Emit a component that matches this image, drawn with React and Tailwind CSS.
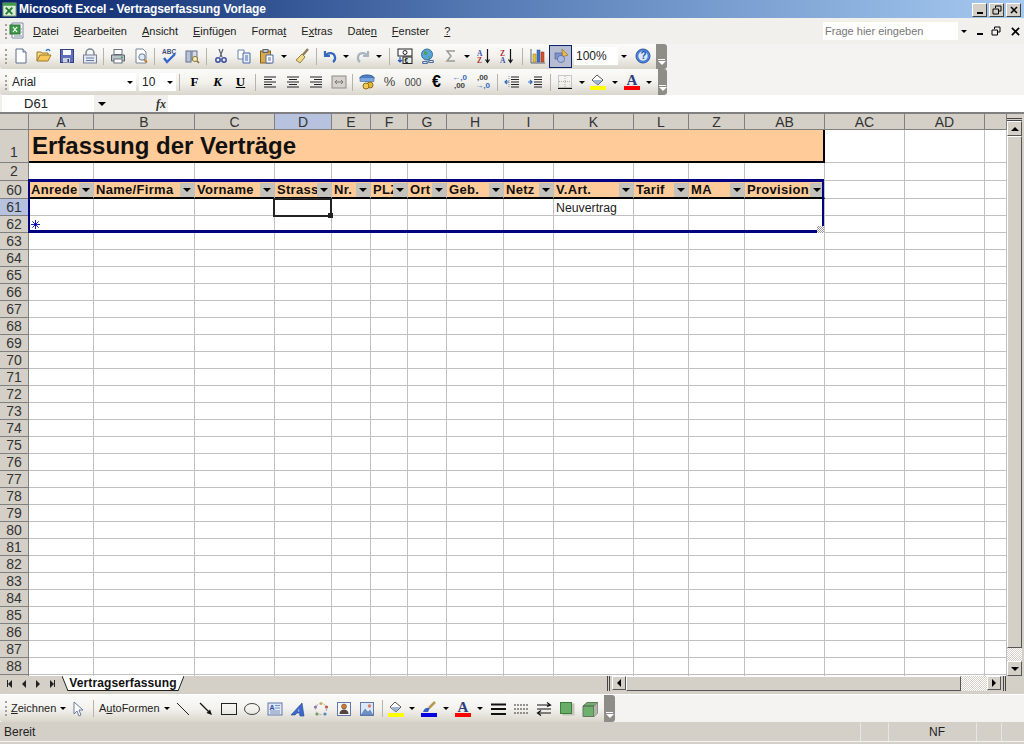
import React from 'react';

const sans = 'font-["Liberation_Sans",Arial,sans-serif]';

const columns = [
  { name: 'A', label: 'Anrede' },
  { name: 'B', label: 'Name/Firma' },
  { name: 'C', label: 'Vorname' },
  { name: 'D', label: 'Strass', active: true },
  { name: 'E', label: 'Nr.' },
  { name: 'F', label: 'PLZ' },
  { name: 'G', label: 'Ort' },
  { name: 'H', label: 'Geb.' },
  { name: 'I', label: 'Netz' },
  { name: 'K', label: 'V.Art.' },
  { name: 'L', label: 'Tarif' },
  { name: 'Z', label: 'MA' },
  { name: 'AB', label: 'Provision' },
  { name: 'AC' },
  { name: 'AD' },
  { name: '' },
];

const gridCols = 'grid-cols-[29px_65px_101px_80px_57px_39px_37px_39px_57px_50px_80px_55px_56px_80px_80px_80px_22px]';
const restRows = Array.from({ length: 26 }, (_, i) => 63 + i);

// toolbar glyphs, all on a 16x16 box
const icons = {
  doc: <><path d="M3 1h7l3 3v11H3z" fill="#fff" stroke="#5d6f8c" /><path d="M10 1v3h3" fill="#dde6f2" stroke="#5d6f8c" /></>,
  open: <><path d="M1 13V4h4l1 1h6v2" fill="#f4d98a" stroke="#9c7a26" /><path d="M1 13l3-6h11l-3 6z" fill="#f7c85a" stroke="#9c7a26" /><path d="M10 3c1-2 3-2 4 0" fill="none" stroke="#2f7ad1" strokeWidth="1.5" /></>,
  save: <><rect x="1.5" y="1.5" width="13" height="13" fill="#5f6fc0" stroke="#33407f" /><rect x="4" y="2" width="8" height="5" fill="#fff" /><rect x="4" y="10" width="7" height="4.5" fill="#cfd3dd" /><rect x="8.5" y="11" width="1.5" height="3" fill="#33407f" /></>,
  perm: <><path d="M4 7V5a4 4 0 018 0v2" fill="none" stroke="#7d8796" strokeWidth="1.5" /><rect x="1.5" y="7" width="13" height="8" fill="#e6e8ee" stroke="#76809a" /><path d="M4 10h8M4 12.5h8" stroke="#5a7db0" /></>,
  print: <><rect x="4" y="1.5" width="8" height="5" fill="#fff" stroke="#6a7280" /><path d="M1.5 7h13v6h-13z" fill="#bcc4cc" stroke="#5d6470" /><rect x="4" y="11" width="8" height="4" fill="#fff" stroke="#6a7280" /><rect x="11" y="8.5" width="2" height="1.5" fill="#49a34f" /></>,
  preview: <><path d="M3 1h7l3 3v11H3z" fill="#fff" stroke="#7a8596" /><circle cx="9" cy="9" r="3.2" fill="#dcebf8" stroke="#6e7f99" /><path d="M11 11.5l3 3" stroke="#b8873a" strokeWidth="2" /></>,
  spell: <><text x="1" y="6" fontSize="6.5" fontWeight="700" fill="#42507a" fontFamily="Liberation Sans">ABC</text><path d="M3 10l3 4 8-8" fill="none" stroke="#3667c9" strokeWidth="2.4" /></>,
  research: <><rect x="2" y="3" width="5" height="11" fill="#b6c3d8" stroke="#63718c" /><rect x="8" y="3" width="5" height="9" fill="#d6dbe4" stroke="#63718c" /><circle cx="11" cy="11" r="2.6" fill="#f6e9b8" stroke="#8b7a3e" /><path d="M13 13l2 2" stroke="#8b6a2a" strokeWidth="1.6" /></>,
  cut: <><path d="M6 1l3 8M10 1L7 9" stroke="#5c6470" strokeWidth="1.2" /><circle cx="5" cy="12" r="2.2" fill="none" stroke="#3a4fa0" strokeWidth="1.5" /><circle cx="11" cy="12" r="2.2" fill="none" stroke="#3a4fa0" strokeWidth="1.5" /></>,
  copy: <><path d="M2 2h6v9H2z" fill="#fff" stroke="#6a83ad" /><path d="M7 5h7v10H7z" fill="#e9f0fb" stroke="#4a6aa5" /><path d="M9 8h3M9 10h3M9 12h3" stroke="#4a6aa5" /></>,
  paste: <><rect x="1.5" y="3" width="10" height="12" fill="#d9a94a" stroke="#82601e" /><rect x="4" y="1.5" width="5" height="3" fill="#c3c8cf" stroke="#5b616a" /><path d="M7 7h7v8H7z" fill="#fff" stroke="#4a6aa5" /><path d="M9 10h3M9 12h3" stroke="#4a6aa5" /></>,
  brush: <><path d="M14 1L8 8" stroke="#8c7b5d" strokeWidth="2.4" /><path d="M8 6l3 3-5 6-4-3z" fill="#efd98c" stroke="#94823f" /></>,
  undo: <path d="M3 3v5h5M3.5 8C6 4 12 4 13 9c.4 2-.5 4-2 5" fill="none" stroke="#3467bd" strokeWidth="2.2" />,
  redo: <path d="M13 3v5H8M12.5 8C10 4 4 4 3 9c-.4 2 .5 4 2 5" fill="none" stroke="#a9b5bd" strokeWidth="2.2" />,
  cash: <><rect x="1" y="1" width="14" height="7" fill="#fff" stroke="#222" /><circle cx="8" cy="4.5" r="2" fill="none" stroke="#222" /><rect x="6" y="9" width="9" height="6.5" fill="#e8f0e6" stroke="#222" /><text x="7.5" y="14.5" fontSize="6.5" fontWeight="700" fill="#111" fontFamily="Liberation Sans">€</text><path d="M3 9v5m-2-2l2 2 2-2" fill="none" stroke="#1f55b8" strokeWidth="1.2" /></>,
  globe: <><circle cx="7" cy="6.5" r="5.5" fill="#5aa3d8" stroke="#3a6f99" /><path d="M4 3c2 0 4 1 3 3S4 7 4 5zM8 8c2 0 2 2 1 3" fill="#4da24d" /><path d="M3 13.5h4a2 2 0 010 2H3a2 2 0 010-2zM9 12.5h4a2 2 0 010 2H9a2 2 0 010-2z" fill="none" stroke="#4a6e9e" strokeWidth="1.2" /></>,
  sum: <path d="M12 3H4l4 5-4 5h8" fill="none" stroke="#9a9a96" strokeWidth="1.5" />,
  az: <><text x="1" y="7.5" fontSize="7.5" fontWeight="700" fill="#3a52a8" fontFamily="Liberation Serif">A</text><text x="1" y="15" fontSize="7.5" fontWeight="700" fill="#b03030" fontFamily="Liberation Serif">Z</text><path d="M11.5 1v13M9.5 11.5l2 3 2-3" fill="none" stroke="#111" strokeWidth="1.2" /></>,
  za: <><text x="1" y="7.5" fontSize="7.5" fontWeight="700" fill="#b03030" fontFamily="Liberation Serif">Z</text><text x="1" y="15" fontSize="7.5" fontWeight="700" fill="#3a52a8" fontFamily="Liberation Serif">A</text><path d="M11.5 1v13M9.5 11.5l2 3 2-3" fill="none" stroke="#111" strokeWidth="1.2" /></>,
  chart: <><path d="M1 1v14h14" fill="none" stroke="#5c6470" /><rect x="3" y="6" width="3" height="8" fill="#e8c33b" stroke="#8a7420" strokeWidth=".5" /><rect x="7" y="2" width="3" height="12" fill="#3f76c4" stroke="#274d86" strokeWidth=".5" /><rect x="11" y="4" width="3" height="10" fill="#d2502f" stroke="#8c3018" strokeWidth=".5" /></>,
  draw: <><path d="M9 1l6 6-6 2z" fill="#e6b94b" stroke="#8b6a20" strokeWidth=".6" /><rect x="2" y="5" width="7" height="6" fill="#7f95cf" stroke="#45578f" strokeWidth=".6" /><circle cx="8" cy="11" r="3.6" fill="#a9b8e0" stroke="#45578f" strokeWidth=".6" /></>,
  help: <><circle cx="8" cy="8" r="7" fill="#4d84d8" stroke="#2a57a3" /><circle cx="8" cy="8" r="4.7" fill="#dbe8fa" /><text x="5.4" y="11.4" fontSize="10" fontWeight="700" fill="#2456ad" fontFamily="Liberation Sans">?</text></>,
  left: <path d="M2 3h12M2 5.5h8M2 8h12M2 10.5h8M2 13h12" stroke="#222" />,
  center: <path d="M2 3h12M4 5.5h8M2 8h12M4 10.5h8M2 13h12" stroke="#222" />,
  right: <path d="M2 3h12M6 5.5h8M2 8h12M6 10.5h8M2 13h12" stroke="#222" />,
  merge: <><rect x="1" y="2" width="14" height="12" fill="#d4d2ca" stroke="#8d8c86" /><path d="M4 8h8M4 8l2-2M4 8l2 2M12 8l-2-2M12 8l-2 2" fill="none" stroke="#777" /></>,
  money: <><ellipse cx="8" cy="4" rx="7" ry="3" fill="#4f85cc" stroke="#2f5793" /><rect x="1" y="3.5" width="14" height="4" fill="#7aa7dd" stroke="#2f5793" strokeWidth=".5" /><circle cx="11" cy="11" r="3" fill="#e9bb3b" stroke="#8e6d12" /><circle cx="7" cy="12" r="3" fill="#f0cb58" stroke="#8e6d12" /></>,
  outdent: <><path d="M7 3h8M7 5.5h8M7 8h8M7 10.5h8M7 13h8" stroke="#222" /><path d="M5 8H1m2-2L1 8l2 2" fill="none" stroke="#3467bd" strokeWidth="1.2" /><path d="M5 2v12" stroke="#888" strokeDasharray="1 1" /></>,
  indent: <><path d="M7 3h8M7 5.5h8M7 8h8M7 10.5h8M7 13h8" stroke="#222" /><path d="M1 8h4M3 6l2 2-2 2" fill="none" stroke="#3467bd" strokeWidth="1.2" /></>,
  borders: <><rect x="1.5" y="1.5" width="13" height="12" fill="none" stroke="#999" strokeDasharray="1 1" /><path d="M8 2v11M2 7.5h12" stroke="#aaa" strokeDasharray="1 1" /><path d="M1 14.5h14" stroke="#111" /></>,
  line: <path d="M2 2l12 12" stroke="#222" />,
  arrowLine: <><path d="M2 2l10 10" stroke="#111" strokeWidth="1.2" /><path d="M14 14L8.5 12 12 8.5z" fill="#111" /></>,
  rect: <rect x=".5" y="2.5" width="15" height="11" fill="none" stroke="#222" />,
  ellipse: <ellipse cx="8" cy="8" rx="7.5" ry="5.5" fill="none" stroke="#444" />,
  textbox: <><rect x="1" y="2" width="14" height="12" fill="#dfe8f6" stroke="#6378a8" /><text x="2.5" y="8.5" fontSize="7" fontWeight="700" fill="#2d4aa0" fontFamily="Liberation Sans">A</text><path d="M8 4.5h5M8 7h5M3 10h10M3 12h10" stroke="#6378a8" strokeWidth=".8" /></>,
  wordart: <><path d="M1 14L12 2l2 13h-4l-.5-3H7l-2 2z" fill="#3d69c9" stroke="#22438f" strokeWidth=".6" /><path d="M8 10.5h1.3L9 7z" fill="#c4d4f3" /></>,
  diagram: <><circle cx="8" cy="2.5" r="1.6" fill="#d2b24a" /><circle cx="13.5" cy="6" r="1.6" fill="#c65040" /><circle cx="12" cy="13" r="1.6" fill="#4f86c6" /><circle cx="4" cy="13" r="1.6" fill="#6f9a55" /><circle cx="2.5" cy="6" r="1.6" fill="#a06db0" /><circle cx="8" cy="8" r="5.5" fill="none" stroke="#9aa" strokeDasharray="2 2" /></>,
  clip: <><rect x="1.5" y="1.5" width="13" height="13" fill="#f2f4f8" stroke="#6378a8" /><circle cx="8" cy="5.5" r="2.5" fill="#c97a3a" stroke="#5d3a1c" strokeWidth=".5" /><path d="M3.5 13c0-3 2-4.5 4.5-4.5s4.5 1.5 4.5 4.5z" fill="#55443a" /></>,
  image: <><rect x="1.5" y="1.5" width="13" height="13" fill="#dce8f7" stroke="#6378a8" /><circle cx="10.5" cy="5" r="1.7" fill="#d67f6c" /><path d="M2 14l4-6 3 3 2-2 3 5z" fill="#6d8fc4" stroke="#48689e" strokeWidth=".4" /></>,
  weight: <path d="M1 3.5h15M1 8h15M1 13h15" stroke="#111" strokeWidth="2" />,
  dash: <path d="M1 4h15M1 8h15M1 12h15" stroke="#333" strokeDasharray="2 1" />,
  swap: <path d="M1 4h13m-3-2.500L14.500 4 11 5.500M15 12H2m3-2.500L1.500 12 5 14.500M1 8h14" fill="none" stroke="#111" strokeWidth="1.2" />,
  shadow: <><rect x="3.500" y="2.500" width="12" height="12" fill="#c4c2bb" /><rect x="1.500" y="1.500" width="11" height="11" fill="#69ad69" stroke="#3c7d3c" /></>,
  cube: <><path d="M1 5l4-3.500h10.500V12L12 15.500H1z" fill="#6fb06f" stroke="#6a7568" /><path d="M1 5h11v10.500M12 5l3.500-3.500" fill="none" stroke="#4b5a49" /><path d="M12 5l3.500-3.500V12L12 15.500z" fill="#b6b3aa" /></>,
};

const Glyph = ({ name, className = 'w-4 h-4' }) => (
  <svg viewBox="0 0 16 16" className={className}>{icons[name]}</svg>
);

const Btn = ({ name, className = 'w-[23px]' }) => (
  <div className={`flex h-full shrink-0 items-center justify-center ${className}`}>
    <Glyph name={name} />
  </div>
);

const Drop = ({ className = 'w-[12px]' }) => (
  <div className={`flex h-full shrink-0 items-center justify-center ${className}`}>
    <span className="h-0 w-0 border-x-[3px] border-t-[3px] border-x-transparent border-t-black" />
  </div>
);

const ColorBtn = ({ kind, bar, className = 'w-[23px]' }) => (
  <div className={`flex h-full shrink-0 flex-col items-center justify-center ${className}`}>
    {kind === 'fill' && (
      <svg viewBox="0 0 16 12" className="h-3 w-4">
        <path d="M7 1l6 5-5 5-6-5z" fill="#fff" stroke="#555" />
        <path d="M3 6h9l-4 5z" fill="#9db6d8" />
      </svg>
    )}
    {kind === 'pen' && (
      <svg viewBox="0 0 16 12" className="h-3 w-4">
        <path d="M2 11c1-4 4-5 7-4l-2 4z" fill="#3a5fc0" />
        <path d="M8 7l6-6" stroke="#b79a52" strokeWidth="2.5" />
      </svg>
    )}
    {kind === 'font' && (
      <span className={`text-[15px] leading-[12px] font-bold text-[#2b3f7e] font-["Liberation_Serif",serif]`}>A</span>
    )}
    <span className={`h-1 w-4 ${bar}`} />
  </div>
);

const Sep = ({ className = 'w-[5px]' }) => (
  <div className={`flex h-full shrink-0 items-center justify-center ${className}`}>
    <span className="h-[17px] w-px bg-[#b5b3aa]" />
  </div>
);

const Grip = () => (
  <div className="flex h-full w-[6px] shrink-0 items-center justify-center">
    <span className="h-[15px] w-[2px] border-y-0 border-l-2 border-dotted border-[#a3a199]" />
  </div>
);

const Handle = ({ className = '' }) => (
  <div className={`flex h-full shrink-0 flex-col items-center justify-end gap-px rounded-r-[3px] bg-[#8e8d88] pb-[4px] ${className}`}>
    <span className="h-px w-[7px] bg-white" />
    <span className="h-0 w-0 border-x-[4px] border-t-[4px] border-x-transparent border-t-white" />
  </div>
);

const Bar = ({ children, className = '' }) => (
  <div className={`flex h-full items-center rounded-l-[3px] bg-gradient-to-b from-[#fbfbf9] via-[#f3f2ee] to-[#d9d6cc] pl-[3px] ${className}`}>
    {children}
  </div>
);

const TitleBtn = ({ children }) => (
  <div className="flex h-[14px] w-[15px] items-center justify-center border border-t-white border-l-white border-r-[#404040] border-b-[#404040] bg-[#d4d0c8]">
    {children}
  </div>
);

const TitleBar = () => (
  <div className="flex h-[18px] items-center bg-gradient-to-r from-[#0a246a] via-[#5a7fb8] to-[#a6caf0]">
    <svg viewBox="0 0 16 16" className="ml-[2px] h-[15px] w-[15px]">
      <rect x="1" y="1" width="14" height="14" fill="#d9ecd7" stroke="#6d8f6a" />
      <path d="M1 1h14v3H1z" fill="#3f9b4a" />
      <path d="M4 6l7 7m0-7l-7 7" stroke="#1f7a2e" strokeWidth="2" />
    </svg>
    <span className={`ml-[2px] text-[12px] font-bold tracking-[-.1px] text-white ${sans}`}>
      Microsoft Excel - Vertragserfassung Vorlage
    </span>
    <div className="ml-auto mr-[3px] flex items-center gap-[2px] pt-px">
      <TitleBtn><span className="mt-[6px] h-[2px] w-[6px] bg-black" /></TitleBtn>
      <TitleBtn>
        <svg viewBox="0 0 10 10" className="h-[10px] w-[10px]">
          <path d="M3.5 3V1h5.5v5H7M1 4h5.5v5H1z" fill="none" stroke="#000" />
        </svg>
      </TitleBtn>
      <TitleBtn>
        <svg viewBox="0 0 10 10" className="h-[10px] w-[10px]">
          <path d="M2 2l6 6M8 2L2 8" stroke="#000" strokeWidth="1.5" />
        </svg>
      </TitleBtn>
    </div>
  </div>
);

const MenuBar = () => (
  <div className={`flex h-[26px] items-center bg-[#f1f0ec] pl-[3px] text-[11px] text-[#222] ${sans}`}>
    <Grip />
    <svg viewBox="0 0 18 18" className="h-[18px] w-[18px]">
      <path d="M3 1h11v15H3z" fill="#fff" stroke="#7c8aa2" />
      <rect x="1" y="3" width="10" height="9" fill="#3f9b4a" stroke="#2c6e34" />
      <path d="M4 5l4 5m0-5l-4 5" stroke="#fff" strokeWidth="1.2" />
      <path d="M12 7h1M12 10h1M5 14h8" stroke="#7c8aa2" />
    </svg>
    <div className="ml-[6px] flex gap-[15px]">
      <span><u>D</u>atei</span>
      <span><u>B</u>earbeiten</span>
      <span><u>A</u>nsicht</span>
      <span><u>E</u>infügen</span>
      <span>Forma<u>t</u></span>
      <span>E<u>x</u>tras</span>
      <span>Date<u>n</u></span>
      <span><u>F</u>enster</span>
      <span><u>?</u></span>
    </div>
    <div className="ml-auto flex items-center">
      <div className="flex h-[18px] w-[147px] items-center justify-between bg-white pl-[2px] text-[#777]">
        Frage hier eingeben
        <div className="flex h-full w-[12px] items-center justify-center bg-[#f1f0ec]">
          <span className="h-0 w-0 border-x-[3px] border-t-[3px] border-x-transparent border-t-black" />
        </div>
      </div>
      <span className="ml-[7px] mt-[6px] h-[2px] w-[6px] bg-black" />
      <svg viewBox="0 0 10 10" className="ml-[8px] h-[10px] w-[10px]">
        <path d="M3.5 3V1h5.5v5H7M1 4h5.5v5H1z" fill="none" stroke="#000" />
      </svg>
      <svg viewBox="0 0 10 10" className="ml-[10px] mr-[4px] h-[9px] w-[9px]">
        <path d="M1 1l8 8M9 1L1 9" stroke="#000" strokeWidth="1.8" />
      </svg>
    </div>
  </div>
);

const StandardBar = () => (
  <div className="h-[25px] bg-[#f4f3f1]">
    <div className="flex h-full w-[667px]">
      <Bar className="flex-1 pb-px">
        <Grip />
        <Btn name="doc" />
        <Btn name="open" />
        <Btn name="save" />
        <Btn name="perm" />
        <Sep />
        <Btn name="print" />
        <Btn name="preview" />
        <Sep />
        <Btn name="spell" />
        <Btn name="research" />
        <Sep className="w-[6px]" />
        <Btn name="cut" />
        <Btn name="copy" />
        <Btn name="paste" />
        <Drop />
        <Btn name="brush" />
        <Sep className="w-[7px]" />
        <Btn name="undo" className="w-[20px]" />
        <Drop />
        <Btn name="redo" className="w-[21px]" />
        <Drop />
        <Sep className="w-[8px]" />
        <Btn name="cash" />
        <Btn name="globe" />
        <Btn name="sum" />
        <Drop className="w-[10px]" />
        <Btn name="az" />
        <Btn name="za" />
        <Sep className="w-[8px]" />
        <Btn name="chart" />
        <div className="flex h-[23px] w-[23px] shrink-0 items-center justify-center border border-[#0a246a] bg-[#b6bdd2]">
          <Glyph name="draw" />
        </div>
        <div className={`ml-[2px] flex h-[18px] w-[44px] shrink-0 items-center bg-white pl-[2px] text-[12px] text-[#222] ${sans}`}>100%</div>
        <Drop />
        <Btn name="help" className="w-[26px]" />
      </Bar>
      <Handle className="w-[11px]" />
    </div>
  </div>
);

const FormatBar = () => (
  <div className="h-[26px] bg-[#f4f3f1]">
    <div className="flex h-full w-[667px]">
      <Bar className="flex-1">
        <Grip />
        <div className={`flex h-[18px] w-[127px] shrink-0 items-center justify-between bg-white pl-[3px] text-[12px] text-[#222] ${sans}`}>
          Arial
          <Drop />
        </div>
        <div className="w-[3px] shrink-0" />
        <div className={`flex h-[18px] w-[37px] shrink-0 items-center justify-between bg-white pl-[3px] text-[12px] text-[#222] ${sans}`}>
          10
          <Drop />
        </div>
        <Sep className="w-[7px]" />
        <div className="flex h-full w-[23px] shrink-0 items-center justify-center text-[13px] font-bold font-['Liberation_Serif',serif]">F</div>
        <div className="flex h-full w-[23px] shrink-0 items-center justify-center text-[13px] font-bold italic font-['Liberation_Serif',serif]">K</div>
        <div className="flex h-full w-[23px] shrink-0 items-center justify-center text-[13px] font-bold underline font-['Liberation_Serif',serif]">U</div>
        <Sep className="w-[6px]" />
        <Btn name="left" />
        <Btn name="center" />
        <Btn name="right" />
        <Btn name="merge" />
        <Sep />
        <Btn name="money" />
        <div className={`flex h-full w-[23px] shrink-0 items-center justify-center text-[13px] text-[#444] ${sans}`}>%</div>
        <div className={`flex h-full w-[24px] shrink-0 items-center justify-center text-[10px] text-[#444] ${sans}`}>000</div>
        <div className={`flex h-full w-[23px] shrink-0 items-center justify-center text-[16px] font-bold text-black ${sans}`}>€</div>
        <div className={`flex h-full w-[23px] shrink-0 flex-col items-center justify-center text-[8px] leading-[8px] font-bold text-[#444] ${sans}`}>
          <span className="text-[#3467bd]">←,0</span>
          <span>,00</span>
        </div>
        <div className={`flex h-full w-[23px] shrink-0 flex-col items-center justify-center text-[8px] leading-[8px] font-bold text-[#444] ${sans}`}>
          <span>,00</span>
          <span className="text-[#3467bd]">→,0</span>
        </div>
        <Sep className="w-[6px]" />
        <Btn name="outdent" />
        <Btn name="indent" />
        <Sep className="w-[9px]" />
        <Btn name="borders" className="w-[20px]" />
        <Drop className="w-[13px]" />
        <ColorBtn kind="fill" bar="bg-[#ffff00]" className="w-[20px]" />
        <Drop className="w-[13px]" />
        <ColorBtn kind="font" bar="bg-[#ff0000]" className="w-[22px]" />
        <Drop />
      </Bar>
      <Handle className="w-[9px]" />
    </div>
  </div>
);

const FormulaBar = () => (
  <div className={`flex h-[17px] bg-[#f1f0ec] text-[13px] ${sans}`}>
    <div className="ml-[2px] flex w-[92px] items-center justify-center bg-white pr-[24px] text-[#222]">D61</div>
    <div className="flex w-[16px] items-center justify-center">
      <span className="h-0 w-0 border-x-[4px] border-t-[4px] border-x-transparent border-t-black" />
    </div>
    <div className="flex w-[58px] items-center justify-end pr-[2px] text-[12px] font-bold italic text-[#333] font-['Liberation_Serif',serif]">fx</div>
    <div className="flex-1 bg-white" />
  </div>
);

const HeadCell = ({ children, active, className = 'items-center' }) => (
  <div className={`flex justify-center border-r border-b border-[#808080] text-[14px] leading-none text-[#333] ${active ? 'bg-[#b6c2de]' : 'bg-[#d4d0c8]'} ${className}`}>
    {children}
  </div>
);

const Cell = ({ children }) => (
  <div className="flex items-center overflow-hidden border-r border-b border-[#c0c0c0] bg-white pl-[2px] text-[12.3px] leading-none text-[#222]">
    {children}
  </div>
);

const EmptyRow = ({ n, active, headClass }) => (
  <>
    <HeadCell active={active} className={headClass}>{n}</HeadCell>
    {columns.map((c, i) => <Cell key={i} />)}
  </>
);

const FilterCell = ({ label }) => (
  <div className="flex items-center overflow-hidden border-r border-b-2 border-[#c0c0c0] border-b-black bg-[#ffcc99] pt-[2px] pl-[2px] text-[13px] font-bold tracking-[.3px] text-[#111]">
    <span className="flex-1 overflow-hidden whitespace-nowrap">{label}</span>
    <span className="flex h-[14px] w-[14px] shrink-0 items-center justify-center bg-[#c4c2bc]">
      <span className="h-0 w-0 border-x-[4px] border-t-[4px] border-x-transparent border-t-black" />
    </span>
  </div>
);

const Sheet = () => (
  <div className={`relative flex-1 overflow-hidden ${sans}`}>
    <div className={`grid h-full border-t-2 border-[#808080] ${gridCols} grid-rows-[16px_33px_18px_18px_17px_17px_repeat(26,17px)_17px] content-start`}>
      {/* column headers */}
      <HeadCell />
      {columns.map((c) => <HeadCell key={c.name} active={c.active}>{c.name}</HeadCell>)}

      {/* merged title row */}
      <HeadCell className="items-end pb-[3px]">1</HeadCell>
      <div className="col-span-13 flex items-center border-r-2 border-b-2 border-black bg-[#ffcc99] pt-px pl-[3px] text-[24px] leading-none font-bold text-[#111]">
        Erfassung der Verträge
      </div>
      {columns.slice(13).map((c, i) => <Cell key={i} />)}

      <EmptyRow n={2} headClass="items-start pt-px" />

      {/* list header */}
      <HeadCell>60</HeadCell>
      {columns.slice(0, 13).map((c) => <FilterCell key={c.name} label={c.label} />)}
      {columns.slice(13).map((c, i) => <Cell key={i} />)}

      {/* data row */}
      <HeadCell active>61</HeadCell>
      {columns.map((c, i) => (
        <Cell key={i}>{c.name === 'K' ? <span className="pt-[2px]">Neuvertrag</span> : null}</Cell>
      ))}

      <HeadCell>62</HeadCell>
      <Cell>
        <svg viewBox="0 0 10 10" className="mt-[1px] h-[9px] w-[9px]">
          <path d="M5 0v10M0 5h10M1.5 1.5l7 7M8.5 1.5l-7 7" stroke="#0000a0" strokeWidth="1" />
        </svg>
      </Cell>
      {columns.slice(1).map((c, i) => <Cell key={i} />)}

      {restRows.map((n) => <EmptyRow key={n} n={n} />)}
      <EmptyRow n={89} />
    </div>

    {/* list frame around rows 60-62 */}
    <div className="pointer-events-none absolute top-[67px] left-[28px] h-[54px] w-[796px] border-x-[2px] border-t-[3px] border-b-[3px] border-[#000080]">
      <span className="absolute right-[-2px] bottom-[-3px] h-[7px] w-[7px] bg-[repeating-conic-gradient(#999_0_25%,#fff_0_50%)] bg-[length:2px_2px]" />
    </div>
    {/* selected cell */}
    <div className="pointer-events-none absolute top-[86px] left-[273px] h-[19px] w-[59px] border-2 border-[#222]">
      <span className="absolute right-[-3px] bottom-[-3px] h-[5px] w-[5px] bg-[#222]" />
    </div>

    {/* vertical scroll bar */}
    <div className="absolute top-[2px] right-0 bottom-0 flex w-[17px] flex-col bg-[#d4d0c8] pr-[2px]">
      <div className="mt-[4px] h-[3px] border-y border-[#444]" />
      <div className="flex h-[15px] items-center justify-center border border-t-white border-l-white border-r-[#555] border-b-[#555] bg-[#d4d0c8]">
        <span className="h-0 w-0 border-x-[4px] border-b-[4px] border-x-transparent border-b-black" />
      </div>
      <div className="flex-1 border border-t-white border-l-white border-r-[#555] border-b-[#555] bg-[#d4d0c8]" />
      <div className="h-[13px] bg-[repeating-conic-gradient(#fff_0_25%,#d4d0c8_0_50%)] bg-[length:2px_2px]" />
      <div className="flex h-[15px] items-center justify-center border border-t-white border-l-white border-r-[#555] border-b-[#555] bg-[#d4d0c8]">
        <span className="h-0 w-0 border-x-[4px] border-t-[4px] border-x-transparent border-t-black" />
      </div>
    </div>
  </div>
);

const ScrollBtn = ({ children }) => (
  <div className="flex h-[14px] w-[14px] shrink-0 items-center justify-center border border-t-white border-l-white border-r-[#555] border-b-[#555] bg-[#d4d0c8]">
    {children}
  </div>
);

const TabBar = () => (
  <div className={`flex h-[17px] items-start bg-[#d4d0c8] ${sans}`}>
    <div className="flex h-[15px] w-[62px] shrink-0 items-center justify-around px-[2px]">
      <span className="flex items-center"><span className="h-[7px] w-px bg-[#222]" /><span className="h-0 w-0 border-y-[4px] border-r-[4px] border-y-transparent border-r-[#222]" /></span>
      <span className="h-0 w-0 border-y-[4px] border-r-[4px] border-y-transparent border-r-[#222]" />
      <span className="h-0 w-0 border-y-[4px] border-l-[4px] border-y-transparent border-l-[#222]" />
      <span className="flex items-center"><span className="h-0 w-0 border-y-[4px] border-l-[4px] border-y-transparent border-l-[#222]" /><span className="h-[7px] w-px bg-[#222]" /></span>
    </div>
    <svg viewBox="0 0 6 15" className="h-[15px] w-[6px] shrink-0"><path d="M0 0l6 15V0z" fill="#fff" /><path d="M0 0l6 15" stroke="#222" fill="none" /></svg>
    <div className="flex h-[15px] w-[110px] shrink-0 items-center justify-center border-b border-[#222] bg-white text-[12px] font-bold tracking-[.12px] text-[#111]">
      Vertragserfassung
    </div>
    <svg viewBox="0 0 6 15" className="h-[15px] w-[6px] shrink-0"><path d="M0 0v15L6 0z" fill="#fff" /><path d="M0 15L6 0" stroke="#222" fill="none" /></svg>
    <div className="ml-[423px] mr-[2px] h-[15px] w-[3px] shrink-0 border-x border-[#444]" />
    <ScrollBtn><span className="h-0 w-0 border-y-[4px] border-r-[4px] border-y-transparent border-r-black" /></ScrollBtn>
    <div className="h-[15px] w-[335px] shrink-0 border border-t-white border-l-white border-r-[#555] border-b-[#555] bg-[#d4d0c8]" />
    <div className="h-[15px] w-[26px] shrink-0 bg-[repeating-conic-gradient(#fff_0_25%,#d4d0c8_0_50%)] bg-[length:2px_2px]" />
    <ScrollBtn><span className="h-0 w-0 border-y-[4px] border-l-[4px] border-y-transparent border-l-black" /></ScrollBtn>
    <div className="ml-[2px] h-[15px] w-[3px] shrink-0 border-x border-[#444]" />
  </div>
);

const DrawBar = () => (
  <div className={`mt-px h-[28px] border-t border-white bg-[#f4f3f1] text-[11px] text-[#222] ${sans}`}>
    <div className="flex h-full w-[615px]">
      <Bar className="flex-1">
        <Grip />
        <div className="ml-[2px] flex w-[50px] shrink-0 items-center">
          <u>Z</u>eichnen
          <span className="ml-[4px] h-0 w-0 border-x-[3px] border-t-[3px] border-x-transparent border-t-black" />
        </div>
        <svg viewBox="0 0 16 16" className="ml-[9px] h-4 w-4 shrink-0">
          <path d="M4 1v12l3-3 2 5 2-1-2-5h4z" fill="#fff" stroke="#6a7c9c" />
        </svg>
        <Sep className="ml-[7px] w-[1px]" />
        <div className="ml-[5px] flex w-[72px] shrink-0 items-center">
          A<u>u</u>toFormen
          <span className="ml-[4px] h-0 w-0 border-x-[3px] border-t-[3px] border-x-transparent border-t-black" />
        </div>
        <Btn name="line" />
        <Btn name="arrowLine" />
        <Btn name="rect" />
        <Btn name="ellipse" />
        <Btn name="textbox" />
        <Btn name="wordart" />
        <Btn name="diagram" />
        <Btn name="clip" />
        <Btn name="image" />
        <Sep className="w-[8px]" />
        <ColorBtn kind="fill" bar="bg-[#ffff00]" className="w-[20px]" />
        <Drop />
        <ColorBtn kind="pen" bar="bg-[#0000e0]" className="w-[22px]" />
        <Drop />
        <ColorBtn kind="font" bar="bg-[#ff0000]" className="w-[22px]" />
        <Drop />
        <Btn name="weight" />
        <Btn name="dash" />
        <Btn name="swap" />
        <Btn name="shadow" />
        <Btn name="cube" />
      </Bar>
      <Handle className="w-[11px]" />
    </div>
  </div>
);

const StatusBar = () => (
  <div className={`flex h-[19px] items-center bg-[#d4d0c8] pt-px text-[12px] text-[#222] ${sans}`}>
    <span className="ml-[4px] w-[856px]">Bereit</span>
    <span className="h-full w-px bg-[#e8e6e0]" />
    <span className="ml-[27px] h-full w-px bg-[#e8e6e0]" />
    <span className="ml-[40px]">NF</span>
    <span className="ml-[31px] h-full w-px bg-[#e8e6e0]" />
    <span className="ml-[24px] h-full w-px bg-[#e8e6e0]" />
  </div>
);

export default function App() {
  return (
    <div className="flex h-[744px] w-[1024px] flex-col overflow-hidden bg-[#d4d0c8]">
      <TitleBar />
      <MenuBar />
      <StandardBar />
      <FormatBar />
      <FormulaBar />
      <Sheet />
      <TabBar />
      <DrawBar />
      <StatusBar />
      <div className="h-[3px] border-t border-[#f4f3f1]" />
    </div>
  );
}
